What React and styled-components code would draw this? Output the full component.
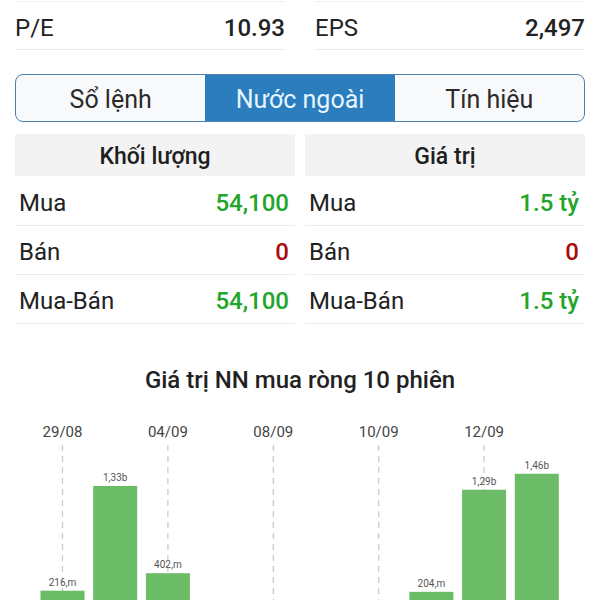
import React from 'react'
import styled, { createGlobalStyle } from 'styled-components'

const GlobalStyle = createGlobalStyle`
  html, body {
    margin: 0;
    padding: 0;
    background: #fff;
    overflow: hidden;
  }
  body {
    font-family: Roboto, "Noto Sans", "Liberation Sans", sans-serif;
    color: #222;
  }
`

const Page = styled.div`
  width: 600px;
  height: 600px;
  padding: 1px 15px 0;
  box-sizing: border-box;
  overflow: hidden;
`

const StatGrid = styled.div`
  display: grid;
  grid-template-columns: 1fr 1fr;
  column-gap: 30px;
`

const StatRow = styled.div`
  display: flex;
  justify-content: space-between;
  align-items: center;
  height: 49px;
  padding-top: 4px;
  box-sizing: border-box;
  border-top: 1px solid #f1f1f1;
  border-bottom: 1px solid #e9e9e9;
  font-size: 24px;
`

const StatLabel = styled.span`
  color: #222;
`

const StatValue = styled.span`
  font-weight: 500;
  color: #222;
`

const Tabs = styled.div`
  display: grid;
  grid-template-columns: repeat(3, 1fr);
  margin-top: 24px;
  height: 48px;
  border: 1px solid #4d80b0;
  border-radius: 8px;
  overflow: hidden;
  box-sizing: border-box;
  background: #f8f9fa;
`

const Tab = styled.div`
  display: flex;
  align-items: center;
  justify-content: center;
  padding-top: 2px;
  font-size: 25px;
  background: ${p => (p.active ? '#2b7dbd' : 'transparent')};
  color: ${p => (p.active ? '#e6f5ff' : '#2a2a2a')};
`

const FlowGrid = styled.div`
  display: grid;
  grid-template-columns: 1fr 1fr;
  column-gap: 10px;
  margin-top: 12px;
`

const Column = styled.div`
  display: flex;
  flex-direction: column;
`

const ColumnHead = styled.div`
  height: 42px;
  margin-bottom: 1px;
  display: flex;
  align-items: center;
  justify-content: center;
  padding-top: 2px;
  box-sizing: border-box;
  background: #f3f3f3;
  font-size: 23px;
  font-weight: 500;
  color: #1e1e1e;
`

const FlowRow = styled.div`
  display: flex;
  justify-content: space-between;
  align-items: center;
  height: 49px;
  padding: 4px 6px 0 4px;
  box-sizing: border-box;
  border-bottom: 1px solid #ececec;
  font-size: 24px;
`

const FlowValue = styled.span`
  font-weight: 500;
  color: ${p => (p.tone === 'up' ? '#22a52a' : p.tone === 'down' ? '#a80c0c' : '#222')};
`

const ChartTitle = styled.div`
  margin: 42px 0 17px;
  line-height: 28px;
  text-align: center;
  font-size: 24px;
  font-weight: 500;
  color: #222;
`

const ChartBox = styled.div`
  margin: 0 -15px;
`

const stats = [
  { label: 'P/E', value: '10.93' },
  { label: 'EPS', value: '2,497' }
]

const flows = [
  {
    title: 'Khối lượng',
    rows: [
      { label: 'Mua', value: '54,100', tone: 'up' },
      { label: 'Bán', value: '0', tone: 'down' },
      { label: 'Mua-Bán', value: '54,100', tone: 'up' }
    ]
  },
  {
    title: 'Giá trị',
    rows: [
      { label: 'Mua', value: '1.5 tỷ', tone: 'up' },
      { label: 'Bán', value: '0', tone: 'down' },
      { label: 'Mua-Bán', value: '1.5 tỷ', tone: 'up' }
    ]
  }
]

// net buy per session, in billions; null = no bar in view
const sessions = [
  { date: '29/08', value: 0.216, text: '216,m' },
  { value: 1.33, text: '1,33b' },
  { date: '04/09', value: 0.402, text: '402,m' },
  { value: null },
  { date: '08/09', value: null },
  { value: null },
  { date: '10/09', value: null },
  { value: 0.204, text: '204,m' },
  { date: '12/09', value: 1.29, text: '1,29b' },
  { value: 1.46, text: '1,46b' }
]

const NetChart = () => {
  const step = 52.7
  const start = 62.5
  const base = 200
  const scale = 94
  const barW = 44
  return (
    <svg width="600" height="190" viewBox="0 0 600 190" style={{ display: 'block' }}>
      {sessions.map((s, i) => {
        const cx = start + step * i
        return s.date ? (
          <g key={'d' + i}>
            <text x={cx} y="26" textAnchor="middle" fontSize="15" fill="#444" fontFamily="Roboto, sans-serif">
              {s.date}
            </text>
            <line x1={cx} y1="34" x2={cx} y2="200" stroke="#c8c8c8" strokeWidth="1.2" strokeDasharray="6 5" />
          </g>
        ) : null
      })}
      {sessions.map((s, i) => {
        if (s.value == null) return null
        const cx = start + step * i
        const top = base - s.value * scale
        return (
          <g key={'b' + i}>
            <rect x={cx - barW / 2} y={top} width={barW} height={base - top} fill="#6cbb66" />
            <text x={cx} y={top - 5} textAnchor="middle" fontSize="10" fill="#555" fontFamily="Roboto, sans-serif">
              {s.text}
            </text>
          </g>
        )
      })}
    </svg>
  )
}

const App = () => (
  <Page>
    <GlobalStyle />
    <StatGrid>
      {stats.map(s => (
        <StatRow key={s.label}>
          <StatLabel>{s.label}</StatLabel>
          <StatValue>{s.value}</StatValue>
        </StatRow>
      ))}
    </StatGrid>
    <Tabs>
      <Tab>Sổ lệnh</Tab>
      <Tab active>Nước ngoài</Tab>
      <Tab>Tín hiệu</Tab>
    </Tabs>
    <FlowGrid>
      {flows.map(f => (
        <Column key={f.title}>
          <ColumnHead>{f.title}</ColumnHead>
          {f.rows.map(r => (
            <FlowRow key={r.label}>
              <span>{r.label}</span>
              <FlowValue tone={r.tone}>{r.value}</FlowValue>
            </FlowRow>
          ))}
        </Column>
      ))}
    </FlowGrid>
    <ChartTitle>Giá trị NN mua ròng 10 phiên</ChartTitle>
    <ChartBox>
      <NetChart />
    </ChartBox>
  </Page>
)

export default App
